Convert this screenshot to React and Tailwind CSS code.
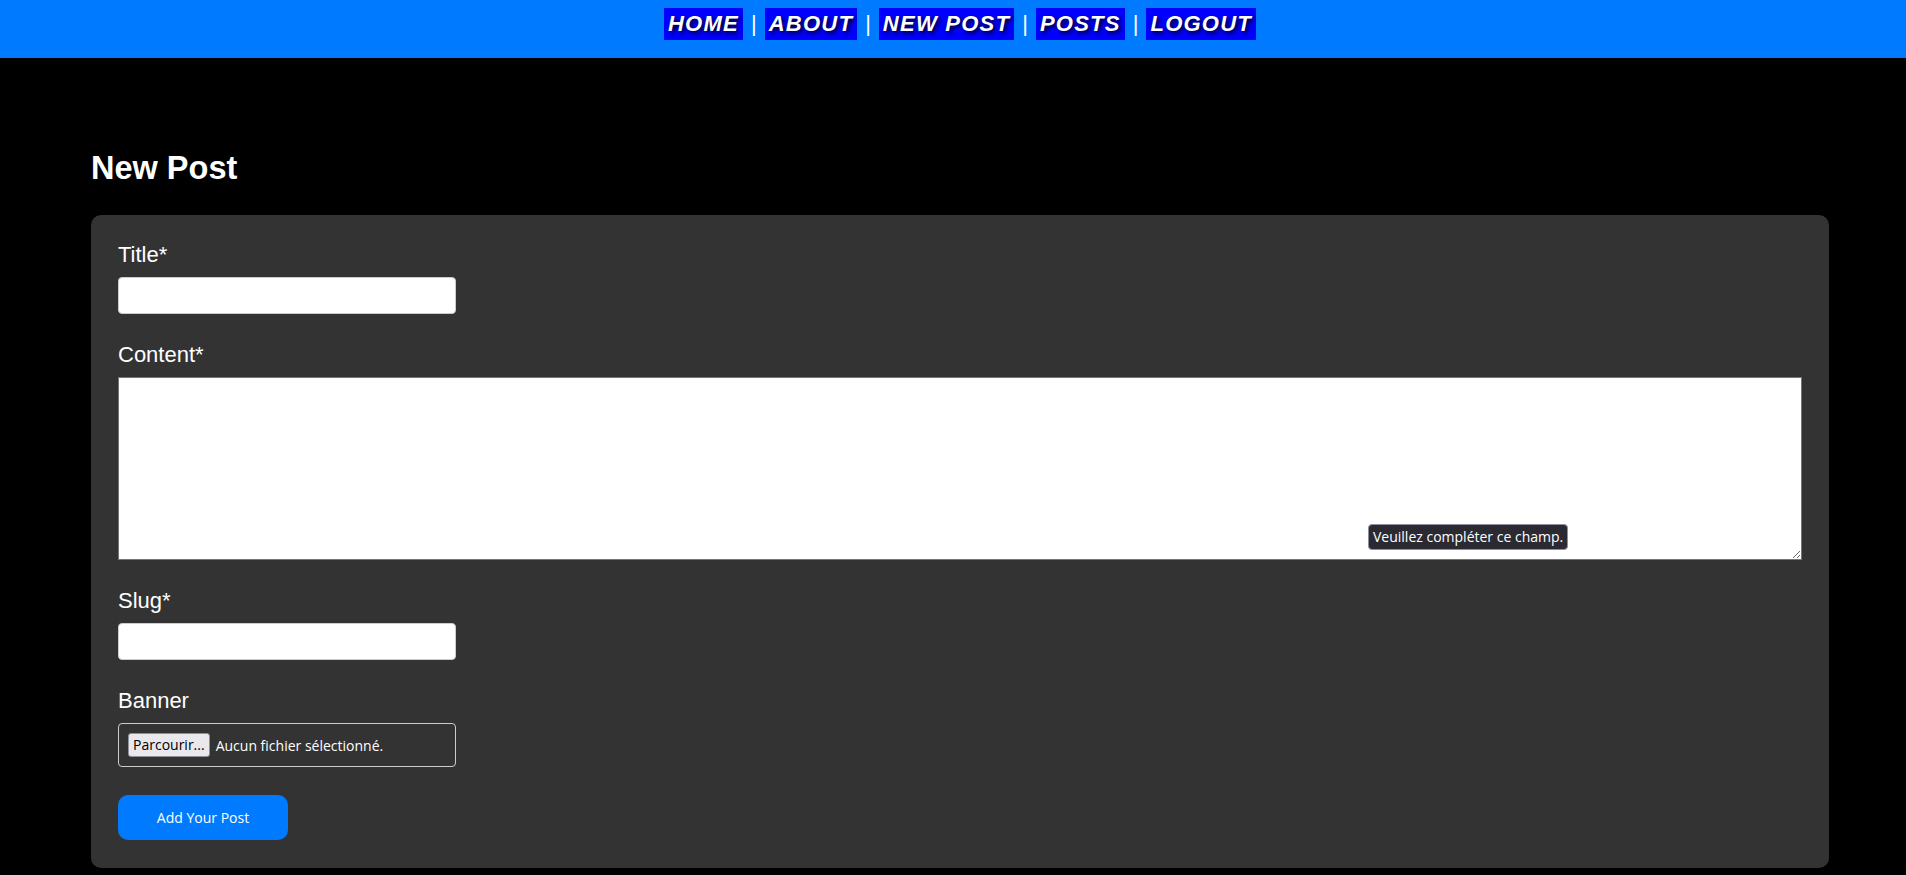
import { useState } from "react";

const links = ["HOME", "ABOUT", "NEW POST", "POSTS", "LOGOUT"];

function Field({ label, children }) {
  return (
    <div className="flex flex-col items-start">
      <label className="mb-[10px] text-[22px] leading-[25px] text-white">
        {label}
      </label>
      {children}
    </div>
  );
}

export default function App() {
  const [title, setTitle] = useState("");
  const [content, setContent] = useState("");
  const [slug, setSlug] = useState("");

  return (
    <div className="min-h-screen bg-black font-['Liberation_Sans',Arial,sans-serif]">
      {/* barre de navigation */}
      <nav className="flex h-[58px] items-start justify-center bg-[#007bff] pl-[14px] pt-[8px]">
        {links.map((link, index) => (
          <div key={link} className="flex items-start">
            {index > 0 && (
              <span className="mx-[8px] text-[22px] leading-[32px] text-white">
                |
              </span>
            )}
            <a
              href="#"
              className="bg-[#0000ff] px-[4px] text-[22px] font-bold italic leading-[32px] tracking-[1.25px] text-white [text-shadow:2px_2px_4px_#000]"
            >
              {link}
            </a>
          </div>
        ))}
      </nav>

      <main className="pl-[91px] pr-[77px] pt-[92px] pb-[8px]">
        <h1 className="mb-[28px] text-[32.5px] font-bold leading-[37px] text-white">
          New Post
        </h1>

        <form
          className="flex flex-col rounded-[10px] bg-[#333333] px-[27px] pt-[27px] pb-[28px]"
          onSubmit={(e) => e.preventDefault()}
        >
          <Field label="Title*">
            <input
              value={title}
              onChange={(e) => setTitle(e.target.value)}
              className="h-[37px] w-[338px] rounded-[4px] border border-[#cccccc] bg-white px-2 outline-none"
            />
          </Field>

          <div className="mt-[28px]">
            <Field label="Content*">
              <div className="relative w-full">
                <textarea
                  value={content}
                  onChange={(e) => setContent(e.target.value)}
                  className="block h-[183px] w-full resize-y border border-[#767676] bg-white p-2 outline-none"
                />
                {/* bulle de validation */}
                <div className="absolute left-[1250px] top-[147px] rounded-[4px] border border-[#8f8f9d] bg-[#2b2a33] px-[4px] font-['Open_Sans',sans-serif] text-[14px] leading-[24px] text-white">
                  Veuillez compléter ce champ.
                </div>
              </div>
            </Field>
          </div>

          <div className="mt-[28px]">
            <Field label="Slug*">
              <input
                value={slug}
                onChange={(e) => setSlug(e.target.value)}
                className="h-[37px] w-[338px] rounded-[4px] border border-[#cccccc] bg-white px-2 outline-none"
              />
            </Field>
          </div>

          <div className="mt-[28px]">
            <Field label="Banner">
              <div className="flex h-[44px] w-[338px] items-center rounded-[4px] border border-[#cccccc] pl-[9px] font-['Open_Sans',sans-serif] text-[14px]">
                <button
                  type="button"
                  className="h-[24px] rounded-[3px] border border-[#8f8f9d] bg-[#e9e9ed] px-[4px] leading-[20px] text-black"
                >
                  Parcourir...
                </button>
                <span className="ml-[6px] text-white">
                  Aucun fichier sélectionné.
                </span>
              </div>
            </Field>
          </div>

          <button
            type="submit"
            className="mt-[28px] h-[45px] w-[170px] rounded-[10px] bg-[#007bff] font-['Open_Sans',sans-serif] text-[14px] text-white"
          >
            Add Your Post
          </button>
        </form>
      </main>
    </div>
  );
}
